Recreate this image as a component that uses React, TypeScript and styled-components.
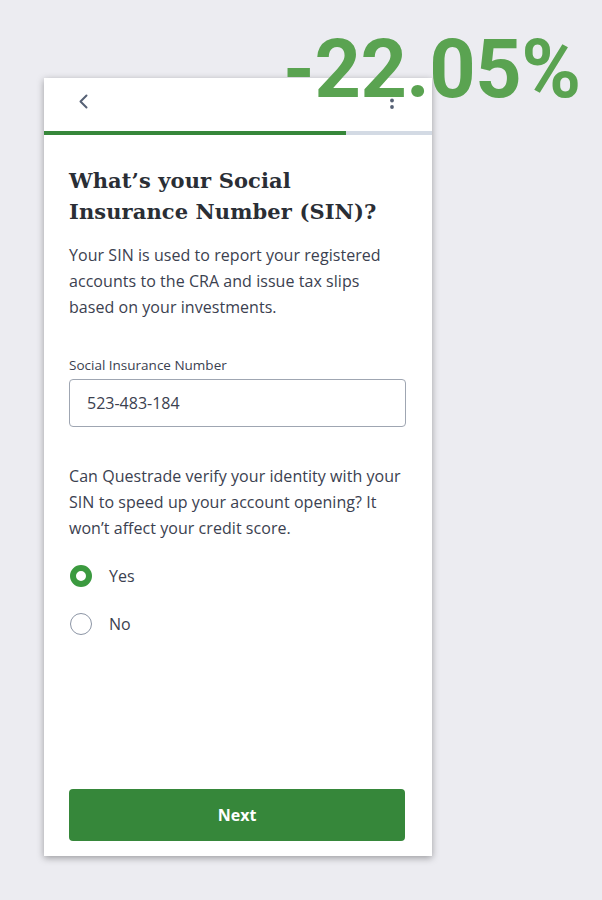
import React from "react";
import styled, { createGlobalStyle } from "styled-components";

const Global = createGlobalStyle`
  html, body { margin: 0; padding: 0; }
  body {
    background: #ececf1;
    font-family: "Open Sans", "Liberation Sans", sans-serif;
    width: 602px;
    height: 900px;
    overflow: hidden;
  }
`;

const Page = styled.div`
  position: relative;
  width: 602px;
  height: 900px;
  padding: 78px 0 0 44px;
  box-sizing: border-box;
`;

const Card = styled.div`
  width: 388px;
  height: 778px;
  background: #ffffff;
  box-shadow: 0 2px 7px rgba(0, 0, 0, 0.35);
  display: flex;
  flex-direction: column;
`;

const Header = styled.div`
  height: 53px;
  box-sizing: border-box;
  padding: 11px 28px 0 26px;
  display: flex;
  justify-content: space-between;
  align-items: flex-start;
`;

const IconButton = styled.button`
  border: none;
  background: none;
  padding: 0;
  width: 24px;
  height: 24px;
  display: flex;
  color: #566175;
`;

const Track = styled.div`
  height: 4px;
  background: #d3dae4;
  display: flex;
`;

const Fill = styled.div<{ $pct: number }>`
  width: ${(p) => p.$pct}%;
  background: #36873a;
`;

const Body = styled.div`
  flex: 1;
  display: flex;
  flex-direction: column;
  padding: 30px 26px 15px 25px;
`;

const Title = styled.h1`
  margin: 0;
  font-family: "DejaVu Serif", "Liberation Serif", serif;
  font-weight: 700;
  font-size: 21px;
  line-height: 31px;
  color: #2a2e35;
  letter-spacing: 0.1px;
`;

const Text = styled.p<{ $mt: number }>`
  margin: ${(p) => p.$mt}px 0 0;
  font-size: 16px;
  line-height: 26px;
  color: #3b4150;
  letter-spacing: 0.05px;
`;

const Label = styled.label`
  margin-top: 35px;
  font-size: 13.5px;
  line-height: 20px;
  color: #3b4150;
`;

const Input = styled.div`
  margin-top: 4px;
  height: 48px;
  box-sizing: border-box;
  border: 1.5px solid #9fa6b2;
  border-radius: 4px;
  padding: 0 17px;
  display: flex;
  align-items: center;
  font-size: 16px;
  color: #3b4150;
`;

const Options = styled.div`
  margin-top: 24px;
  display: flex;
  flex-direction: column;
  gap: 26px;
`;

const Option = styled.div`
  display: flex;
  align-items: center;
  gap: 17px;
  height: 22px;
  font-size: 16px;
  color: #3b4150;
`;

const Radio = styled.span<{ $on: boolean }>`
  width: 22px;
  height: 22px;
  box-sizing: border-box;
  border-radius: 50%;
  border: ${(p) => (p.$on ? "6px solid #3b9a3f" : "1.5px solid #8c95a5")};
  background: #fff;
  margin-left: 1px;
`;

const Spacer = styled.div`
  flex: 1;
`;

const Button = styled.button`
  height: 52px;
  border: none;
  border-radius: 4px;
  background: #36873a;
  color: #ffffff;
  font-family: "Open Sans", "Liberation Sans", sans-serif;
  font-weight: 700;
  font-size: 16px;
  margin: 0 1px 0 0;
`;

const Delta = styled.div`
  position: absolute;
  top: 29px;
  left: 283px;
  font-family: Roboto, "Liberation Sans", sans-serif;
  font-weight: 700;
  font-size: 81px;
  line-height: 1;
  color: #5aa351;
  letter-spacing: -0.5px;
`;

export default function App() {
  return (
    <Page>
      <Global />
      <Card>
        <Header>
          <IconButton aria-label="Back">
            <svg width="24" height="24" viewBox="0 0 24 24" fill="none">
              <path d="M16.5 6.5 L10.5 12.5 L16.5 18.5" stroke="currentColor" strokeWidth="2" strokeLinecap="round" strokeLinejoin="round" />
            </svg>
          </IconButton>
          <IconButton aria-label="More">
            <svg width="24" height="24" viewBox="0 0 24 24" fill="currentColor">
              <circle cx="12" cy="5" r="1.9" />
              <circle cx="12" cy="11.5" r="1.9" />
              <circle cx="12" cy="18" r="1.9" />
            </svg>
          </IconButton>
        </Header>
        <Track>
          <Fill $pct={77.8} />
        </Track>
        <Body>
          <Title>What’s your Social Insurance Number (SIN)?</Title>
          <Text $mt={15}>
            Your SIN is used to report your registered accounts to the CRA and issue tax slips based on your investments.
          </Text>
          <Label>Social Insurance Number</Label>
          <Input>523-483-184</Input>
          <Text $mt={36}>
            Can Questrade verify your identity with your SIN to speed up your account opening? It won’t affect your credit score.
          </Text>
          <Options>
            <Option>
              <Radio $on={true} />
              Yes
            </Option>
            <Option>
              <Radio $on={false} />
              No
            </Option>
          </Options>
          <Spacer />
          <Button>Next</Button>
        </Body>
      </Card>
      <Delta>-22.05%</Delta>
    </Page>
  );
}
